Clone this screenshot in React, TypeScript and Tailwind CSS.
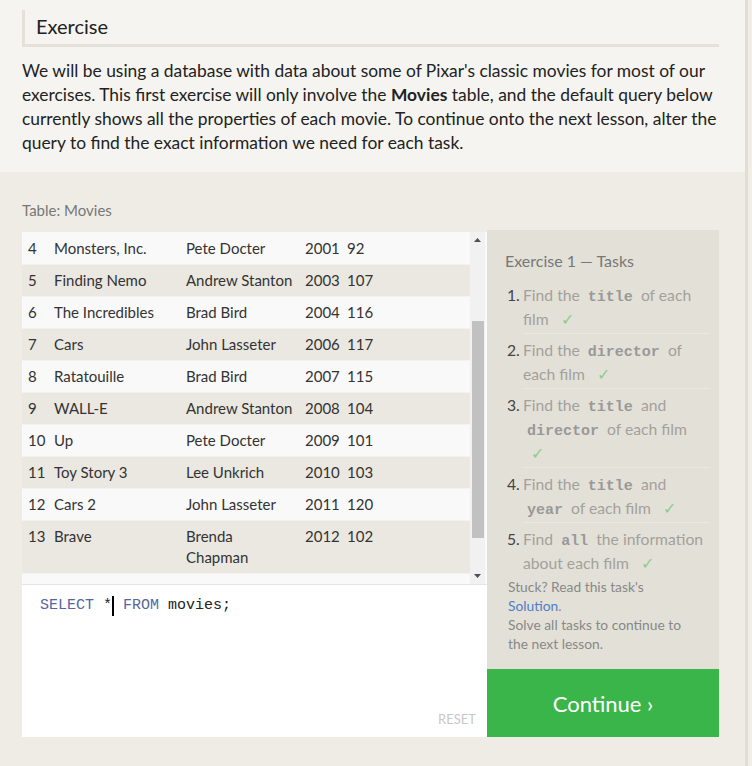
import React from "react";

type Movie = {
  id: number;
  title: string;
  director: string;
  year: number;
  length: number;
};

const movies: Movie[] = [
  { id: 4, title: "Monsters, Inc.", director: "Pete Docter", year: 2001, length: 92 },
  { id: 5, title: "Finding Nemo", director: "Andrew Stanton", year: 2003, length: 107 },
  { id: 6, title: "The Incredibles", director: "Brad Bird", year: 2004, length: 116 },
  { id: 7, title: "Cars", director: "John Lasseter", year: 2006, length: 117 },
  { id: 8, title: "Ratatouille", director: "Brad Bird", year: 2007, length: 115 },
  { id: 9, title: "WALL-E", director: "Andrew Stanton", year: 2008, length: 104 },
  { id: 10, title: "Up", director: "Pete Docter", year: 2009, length: 101 },
  { id: 11, title: "Toy Story 3", director: "Lee Unkrich", year: 2010, length: 103 },
  { id: 12, title: "Cars 2", director: "John Lasseter", year: 2011, length: 120 },
  { id: 13, title: "Brave", director: "Brenda Chapman", year: 2012, length: 102 },
];

const Code = ({ children }: { children: React.ReactNode }) => (
  <code className="mx-[4px] font-['Liberation_Mono',monospace] text-[15px] font-bold leading-none text-[#999]">
    {children}
  </code>
);

const Check = () => <span className="ml-[8px] text-[#8fcb8f]">✓</span>;

type Task = { n: number; body: React.ReactNode };

const tasks: Task[] = [
  { n: 1, body: <>Find the <Code>title</Code> of each film <Check /></> },
  { n: 2, body: <>Find the <Code>director</Code> of each film <Check /></> },
  { n: 3, body: <>Find the <Code>title</Code> and <Code>director</Code> of each film <Check /></> },
  { n: 4, body: <>Find the <Code>title</Code> and <Code>year</Code> of each film <Check /></> },
  { n: 5, body: <>Find <Code>all</Code> the information about each film <Check /></> },
];

export default function App() {
  return (
    <div className="flex min-h-[766px] w-[752px] font-['Lato',sans-serif] text-[#222]">
      <div className="flex w-[745px] flex-col">
        <section className="bg-[#f5f4f0] pb-[17px] pl-[22px] pr-[26px] pt-[10px]">
          <h2 className="border-b-[3px] border-l-[3px] border-[#e3e1da] pb-[3px] pl-[11px] pt-[2px] text-[20px] leading-[29px] text-[#222]">
            Exercise
          </h2>
          <p className="mt-[12px] text-[17.4px] leading-[24px]">
            We will be using a database with data about some of Pixar's classic movies for most of our
            exercises. This first exercise will only involve the <b>Movies</b> table, and the default query below
            currently shows all the properties of each movie. To continue onto the next lesson, alter the
            query to find the exact information we need for each task.
          </p>
        </section>

        <section className="flex-1 bg-[#efece6] pl-[22px] pr-[26px] pt-[28px]">
          <div className="text-[15px] leading-[20px] text-[#777]">Table: Movies</div>
          <div className="mt-[12px] flex">
            <div className="flex w-[465px] flex-col">
              <div className="flex h-[353px] border-b border-[#e6e6e6] bg-[#f9f9f9]">
                <div className="h-full w-[448px] overflow-hidden pt-[1px]">
                  {movies.map((m, i) => (
                    <div
                      key={m.id}
                      className={`flex border-b border-[#f3f2ee] py-[5px] text-[15px] leading-[21px] text-[#333] ${
                        i % 2 === 0 ? "bg-[#f9f9f9]" : "bg-[#eae8e1]"
                      }`}
                    >
                      <div className="w-[32px] pl-[6px]">{m.id}</div>
                      <div className="w-[132px]">{m.title}</div>
                      <div className="w-[119px] pr-[6px]">{m.director}</div>
                      <div className="w-[42px]">{m.year}</div>
                      <div>{m.length}</div>
                    </div>
                  ))}
                </div>
                <div className="flex w-[15px] flex-col items-center bg-[#f1f1f1]">
                  <svg width="7" height="4" viewBox="0 0 7 4" className="mt-[6px]">
                    <path d="M0 4 L3.5 0 L7 4 Z" fill="#505050" />
                  </svg>
                  <div className="mt-[79px] h-[217px] w-[12px] bg-[#c1c1c1]" />
                  <div className="flex-1" />
                  <svg width="7" height="4" viewBox="0 0 7 4" className="mb-[6px]">
                    <path d="M0 0 L3.5 4 L7 0 Z" fill="#505050" />
                  </svg>
                </div>
              </div>
              <div className="relative h-[152px] bg-white">
                <div className="pl-[18px] pt-[10px] font-['Liberation_Mono',monospace] text-[15px] leading-[22px]">
                  <span className="text-[#5566a0]">SELECT</span>
                  <span className="text-[#222]"> *</span>
                  <span className="relative top-[1px] inline-block h-[20px] w-[2px] bg-black align-top" />
                  <span className="text-[#5566a0]"> FROM</span>
                  <span className="text-[#222]"> movies;</span>
                </div>
                <div className="absolute bottom-[8px] right-[11px] text-[13px] text-[#c8c8c8]">RESET</div>
              </div>
            </div>

            <aside className="-mt-[2px] flex w-[232px] flex-col">
              <div className="flex-1 bg-[#e3e0d7] pl-[18px] pr-[9px] pt-[19px]">
                <h3 className="text-[16px] leading-[24px] text-[#777]">Exercise 1 — Tasks</h3>
                <ol className="mt-[6px]">
                  {tasks.map((t) => (
                    <li key={t.n} className="flex text-[15.7px] leading-[24px] text-[#a3a19c]">
                      <span className="w-[18px] shrink-0 pl-[2px] pt-[4px] text-[#444]">{t.n}.</span>
                      <div className={`flex-1 pb-[2px] pt-[4px] ${t.n < 5 ? "border-b border-[#ebe8e0]" : ""}`}>
                        {t.body}
                      </div>
                    </li>
                  ))}
                </ol>
                <div className="w-[190px] pl-[3px] text-[13.8px] leading-[19px] text-[#888]">
                  Stuck? Read this task's
                  <br />
                  <span className="text-[#4d7ec9]">Solution</span>.
                  <br />
                  Solve all tasks to continue to the next lesson.
                </div>
              </div>
              <button className="flex h-[68px] items-center justify-center bg-[#3ab54a] text-[22px] text-white">
                Continue ›
              </button>
            </aside>
          </div>
        </section>
      </div>
      <div className="w-[3px] bg-[#e1ddd6]" />
      <div className="flex-1 bg-[#f1eee8]" />
    </div>
  );
}
